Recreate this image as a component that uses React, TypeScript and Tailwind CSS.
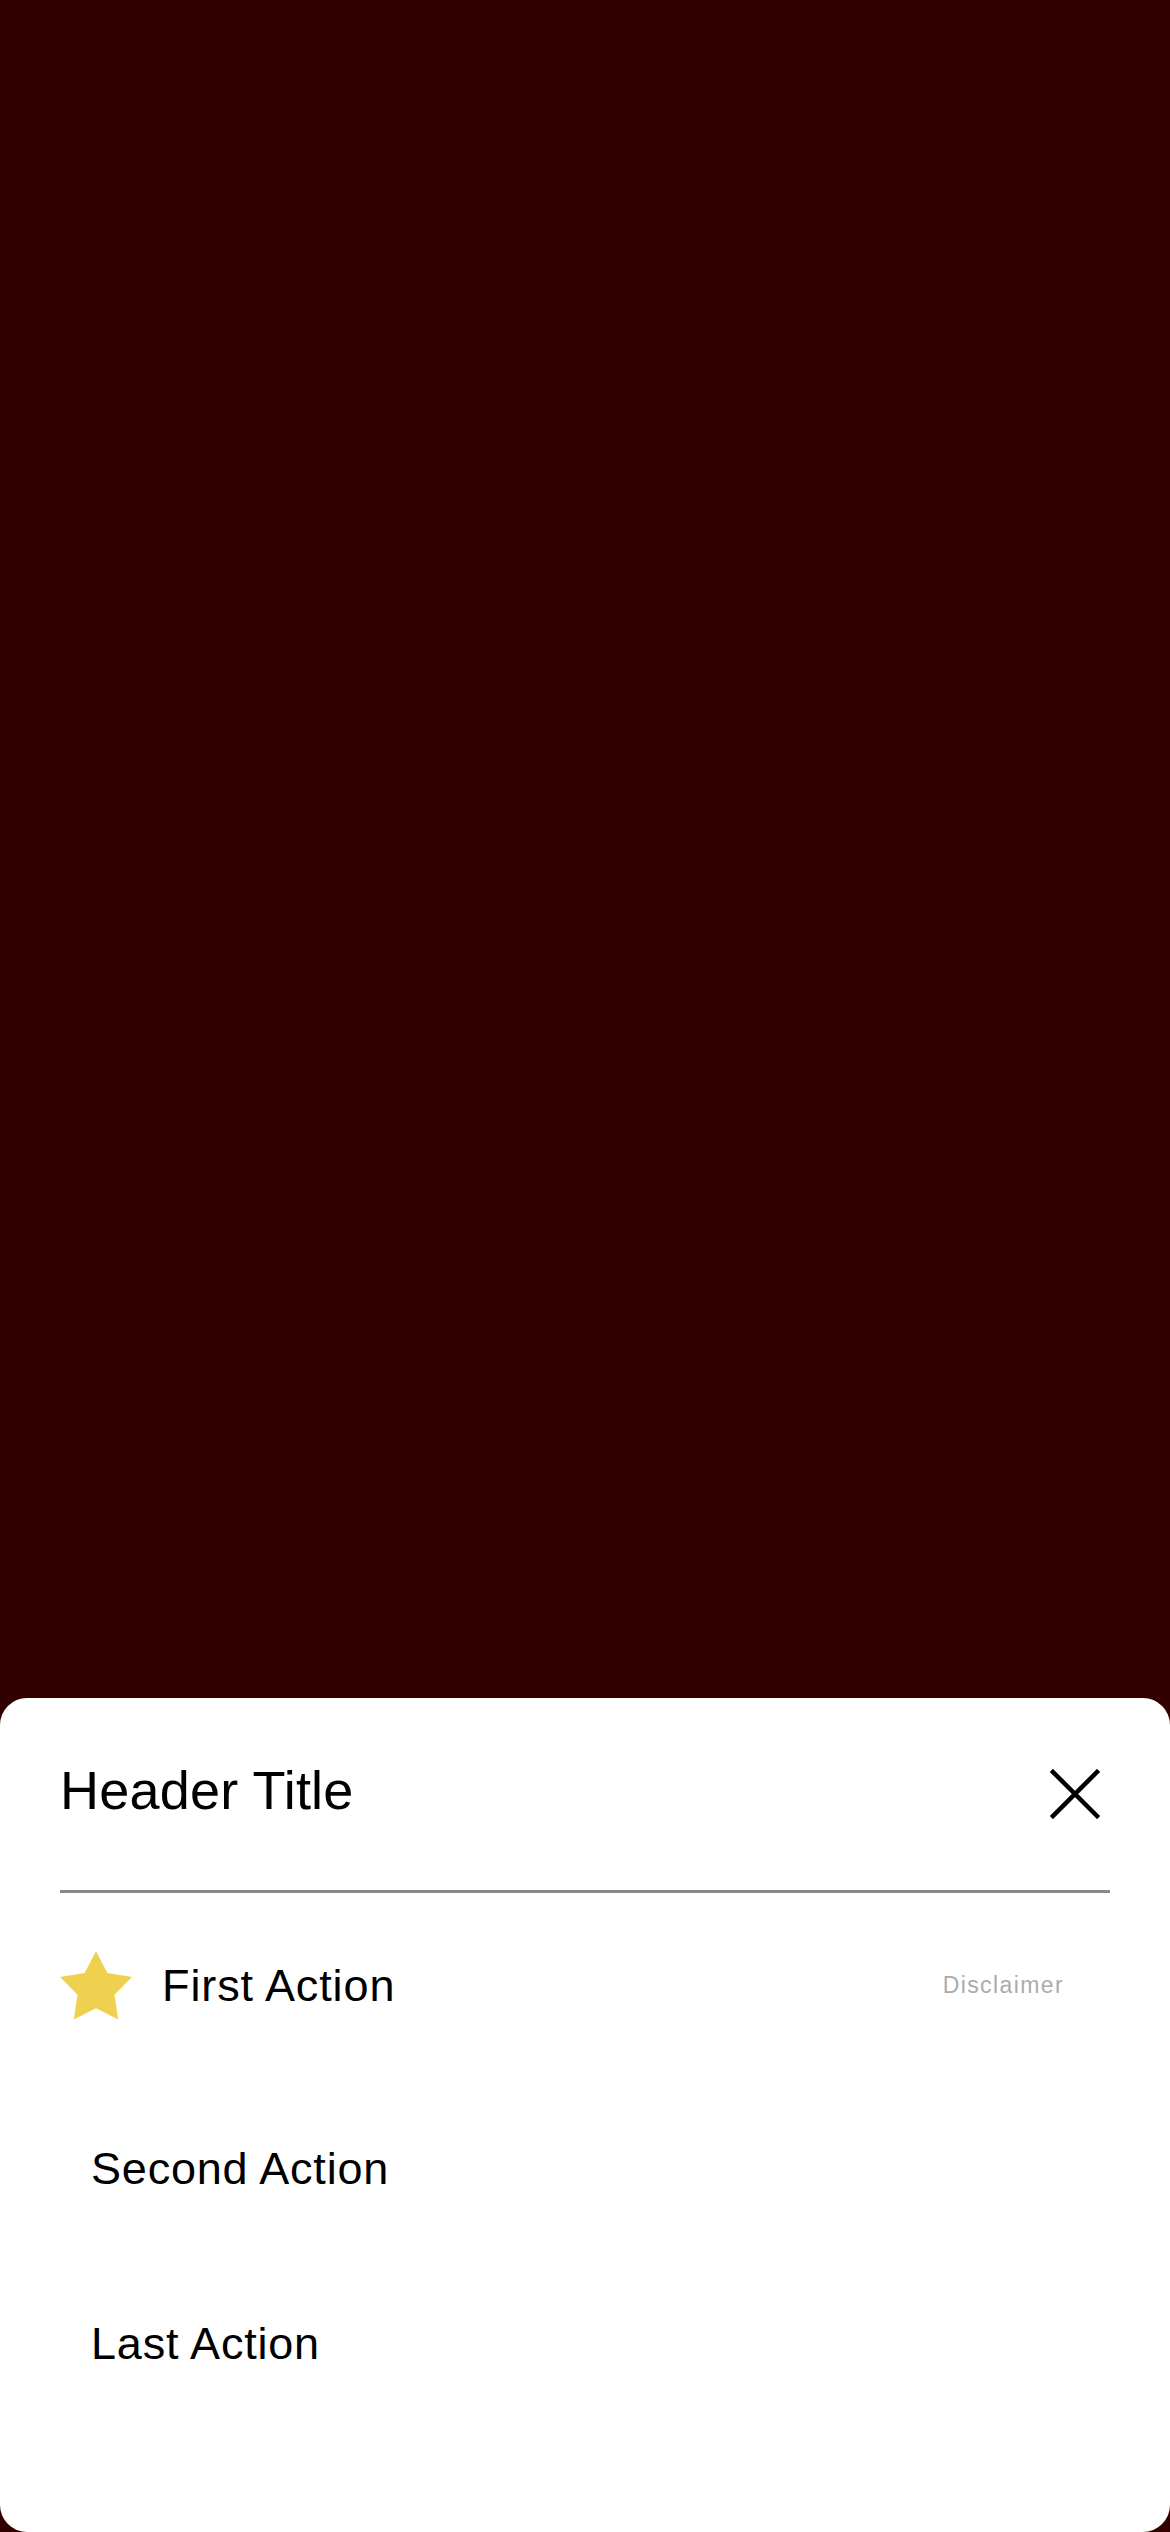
import React from 'react';

const Star = () => (
  <svg viewBox="0 0 72 69" className="w-[72px] h-[69px] shrink-0">
    <polygon
      fill="#F0D04F"
      points="36,0.2 47.4,22.1 71.95,26.1 54.45,43.8 58.2,68.4 36,57.2 13.8,68.4 17.55,43.8 0.05,26.1 24.6,22.1"
    />
  </svg>
);

const CloseIcon = () => (
  <svg viewBox="0 0 50 50" className="w-[50px] h-[50px] mt-[6px] mr-[10px]">
    <path d="M3 3 L47 47 M47 3 L3 47" stroke="#000" strokeWidth="4.5" strokeLinecap="square" />
  </svg>
);

export default function App() {
  return (
    <div
      className="w-full h-[2532px] bg-[#330000] flex flex-col"
      style={{ fontFamily: '"Liberation Sans", Arial, sans-serif' }}
    >
      <div className="h-[1698px] shrink-0" />
      <div className="h-[834px] bg-white rounded-[27px] px-[60px] pt-[65px]">
        <div className="flex items-start justify-between h-[54px]">
          <h1 className="text-[54px] leading-[54px] tracking-[0.2px] text-black">Header Title</h1>
          <CloseIcon />
        </div>
        <div className="mt-[73px] h-[3px] bg-[#888888]" />

        <div className="mt-[58px] flex items-center h-[68px]">
          <Star />
          <span className="ml-[30px] text-[45px] leading-[45px] tracking-[0.9px] text-black">First Action</span>
          <span className="ml-auto mr-[46px] text-[23px] leading-[23px] tracking-[1.4px] text-[#ababab]">
            Disclaimer
          </span>
        </div>

        <div className="mt-[127px] pl-[31px] text-[45px] leading-[45px] tracking-[0.8px] text-black">
          Second Action
        </div>
        <div className="mt-[130px] pl-[31px] text-[45px] leading-[45px] tracking-[0.8px] text-black">
          Last Action
        </div>
      </div>
    </div>
  );
}
